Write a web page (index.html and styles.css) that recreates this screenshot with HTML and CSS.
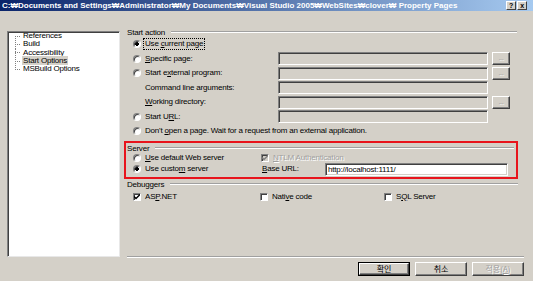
FILE: index.html
```html
<!DOCTYPE html>
<html lang="en">
<head>
    <meta charset="UTF-8">
    <title>Property Pages</title>
    <link rel="stylesheet" href="styles.css">
</head>
<body>
    <div class="window">
        <div class="titlebar">
            <span class="title">C:₩Documents and Settings₩Administrator₩My Documents₩Visual Studio 2005₩WebSites₩clover₩ Property Pages</span>
            <div class="caption-buttons">
                <span class="cap-btn">?</span>
                <span class="cap-btn">x</span>
            </div>
        </div>

        <div class="content">
            <ul class="tree">
                <li><span>References</span></li>
                <li><span>Build</span></li>
                <li><span>Accessibility</span></li>
                <li><span class="selected">Start Options</span></li>
                <li><span>MSBuild Options</span></li>
            </ul>

            <div class="pages">
                <div class="group-label"><span>Start action</span></div>

                <div class="row">
                    <span class="radio checked"></span>
                    <span class="cell"><span class="text focus">Use <u>c</u>urrent page</span></span>
                </div>
                <div class="row">
                    <span class="radio"></span>
                    <span class="cell"><span class="text"><u>S</u>pecific page:</span></span>
                    <span class="textbox"></span>
                    <span class="dots">...</span>
                </div>
                <div class="row">
                    <span class="radio"></span>
                    <span class="cell"><span class="text">Start e<u>x</u>ternal program:</span></span>
                    <span class="textbox"></span>
                    <span class="dots">...</span>
                </div>
                <div class="row">
                    <span class="spacer"></span>
                    <span class="cell"><span class="text">Command line arguments:</span></span>
                    <span class="textbox"></span>
                </div>
                <div class="row">
                    <span class="spacer"></span>
                    <span class="cell"><span class="text"><u>W</u>orking directory:</span></span>
                    <span class="textbox"></span>
                    <span class="dots">...</span>
                </div>
                <div class="row">
                    <span class="radio"></span>
                    <span class="cell"><span class="text">Start U<u>R</u>L:</span></span>
                    <span class="textbox"></span>
                </div>
                <div class="row">
                    <span class="radio"></span>
                    <span class="text">Don't <u>o</u>pen a page. Wait for a request from an external application.</span>
                </div>

                <div class="server-box">
                    <div class="group-label small"><span>Server</span></div>
                    <div class="server-row first">
                        <div class="col-left">
                            <span class="radio"></span>
                            <span class="text"><u>U</u>se default Web server</span>
                        </div>
                        <div class="col-right">
                            <span class="checkbox disabled checked">
                                <svg width="6" height="6" viewBox="0 0 6 6"><path d="M0 2.5 L2 4.5 L6 0.5" fill="none" stroke="#808080" stroke-width="1.4"/></svg>
                            </span>
                            <span class="text disabled-text"><u>N</u>TLM Authentication</span>
                        </div>
                    </div>
                    <div class="server-row">
                        <div class="col-left">
                            <span class="radio checked"></span>
                            <span class="text">Use custo<u>m</u> server</span>
                        </div>
                        <div class="col-right">
                            <span class="text base-label"><u>B</u>ase URL:</span>
                            <span class="textbox url">http://localhost:1111/</span>
                        </div>
                    </div>
                </div>

                <div class="group-label debug"><span>Debuggers</span></div>
                <div class="debug-row">
                    <div class="check-item">
                        <span class="checkbox checked">
                            <svg width="6" height="6" viewBox="0 0 6 6"><path d="M0 2.5 L2 4.5 L6 0.5" fill="none" stroke="#000" stroke-width="1.4"/></svg>
                        </span>
                        <span class="text">AS<u>P</u>.NET</span>
                    </div>
                    <div class="check-item native">
                        <span class="checkbox"></span>
                        <span class="text">Nati<u>v</u>e code</span>
                    </div>
                    <div class="check-item">
                        <span class="checkbox"></span>
                        <span class="text">S<u>Q</u>L Server</span>
                    </div>
                </div>
            </div>
        </div>

        <div class="footer">
            <div class="separator"></div>
            <div class="buttons">
                <span class="button default">확인</span>
                <span class="button">취소</span>
                <span class="button disabled">적용(<u>A</u>)</span>
            </div>
        </div>
    </div>
</body>
</html>
```

FILE: styles.css
```css
* {
    margin: 0;
    padding: 0;
    box-sizing: border-box;
}

body {
    background-color: #d4d0c8;
    font-family: 'Liberation Sans', Arial, sans-serif;
    font-size: 8px;
    letter-spacing: -0.2px;
    color: #000;
}

.window {
    width: 533px;
    height: 281px;
    overflow: hidden;
}

/* Title bar */
.titlebar {
    height: 11px;
    display: flex;
    align-items: center;
    background: linear-gradient(to right, #0a246a, #a6caf0);
    padding: 0 6px 0 2px;
}

.title {
    flex: 1;
    overflow: hidden;
    color: #fff;
    font-weight: bold;
    font-size: 8px;
    letter-spacing: 0;
    white-space: nowrap;
    line-height: 11px;
}

.caption-buttons {
    display: flex;
    gap: 1px;
}

.cap-btn {
    width: 10px;
    height: 9px;
    background: #d4d0c8;
    border: 1px solid;
    border-color: #fff #404040 #404040 #fff;
    font-size: 7px;
    font-weight: bold;
    line-height: 7px;
    text-align: center;
}

/* Main area */
.content {
    display: flex;
    height: 245px;
}

.tree {
    list-style: none;
    width: 113px;
    height: 226px;
    margin: 20px 0 0 7px;
    background: #fff;
    border: 1px solid;
    border-color: #808080 #e8e8e8 #e8e8e8 #808080;
    box-shadow: inset 1px 1px #404040;
}

.tree li {
    height: 8.3px;
    line-height: 8.3px;
    padding-left: 14px;
    background:
        repeating-linear-gradient(to bottom, #808080 0 1px, transparent 1px 2px) 7px 0 / 1px 100% no-repeat,
        repeating-linear-gradient(to right, #808080 0 1px, transparent 1px 2px) 7px 50% / 6px 1px no-repeat;
}

.tree li:first-child {
    background-size: 1px 50%, 6px 1px;
    background-position: 7px 100%, 7px 50%;
}

.tree li:last-child {
    background-size: 1px 50%, 6px 1px;
    background-position: 7px 0, 7px 50%;
}

.tree li span {
    padding: 0 1px;
}

.tree li .selected {
    background: #d4d0c8;
}

.pages {
    flex: 1;
    padding-top: 16px;
}

.group-label {
    display: flex;
    align-items: center;
    height: 10px;
    padding-left: 7px;
    margin-right: 16px;
}

.group-label::after {
    content: "";
    flex: 1;
    margin-left: 6px;
    border-top: 1px solid #a0a0a0;
    border-bottom: 1px solid #fff;
}

.row {
    display: flex;
    align-items: center;
    height: 14.5px;
    padding-left: 13px;
}

.cell {
    width: 133px;
    flex: none;
}

.spacer {
    width: 12px;
    flex: none;
}

.text {
    line-height: 10px;
    white-space: nowrap;
}

.focus {
    display: inline-block;
    outline: 1px dotted #000;
    padding: 0 1px;
    margin-left: -1px;
}

.radio {
    width: 8px;
    height: 8px;
    margin-right: 4px;
    flex: none;
    border-radius: 50%;
    background: #fff;
    border: 1px solid;
    border-color: #808080 #fff #fff #808080;
    box-shadow: inset 1px 1px #404040;
}

.radio.checked {
    background: radial-gradient(circle, #000 0 1.6px, #fff 1.8px);
}

.checkbox {
    display: flex;
    align-items: center;
    justify-content: center;
    width: 8px;
    height: 8px;
    margin-right: 4px;
    flex: none;
    background: #fff;
    border: 1px solid;
    border-color: #808080 #fff #fff #808080;
    box-shadow: inset 1px 1px #404040;
}

.checkbox.disabled {
    background: #d4d0c8;
}

.textbox {
    width: 210px;
    height: 13px;
    flex: none;
    background: #d4d0c8;
    border: 1px solid;
    border-color: #808080 #fff #fff #808080;
    box-shadow: inset 1px 1px #404040;
}

.dots {
    width: 18px;
    height: 13px;
    margin-left: 4px;
    flex: none;
    border: 1px solid;
    border-color: #fff #404040 #404040 #fff;
    box-shadow: inset -1px -1px #808080;
    color: #a0a0a0;
    text-shadow: 1px 1px #fff;
    font-size: 7px;
    line-height: 9px;
    text-align: center;
}

/* Server group, marked with the red box */
.server-box {
    width: 394px;
    height: 38px;
    margin: 2.5px 0 0 4px;
    border: 2px solid #e8141c;
    padding-top: 1px;
}

.server-box .group-label {
    height: 8px;
    padding-left: 1px;
    margin-right: 2px;
}

.server-row {
    display: flex;
    align-items: center;
    height: 12px;
}

.server-row.first {
    height: 11px;
}

.col-left {
    display: flex;
    align-items: center;
    width: 135px;
    padding-left: 7px;
}

.col-right {
    display: flex;
    align-items: center;
}

.disabled-text {
    color: #a0a0a0;
    text-shadow: 1px 1px #fff;
}

.base-label {
    width: 64px;
    padding-left: 1px;
}

.textbox.url {
    width: 183px;
    background: #fff;
    padding-left: 2px;
    line-height: 11px;
    box-shadow: inset 1px 1px #404040, inset -1px -1px #d4d0c8;
}

.group-label.debug {
    margin-right: 15px;
}

.debug-row {
    display: flex;
    align-items: center;
    height: 15px;
    padding-left: 13px;
}

.check-item {
    display: flex;
    align-items: center;
    width: 127px;
}

.check-item.native {
    width: 124px;
}

/* Footer */
.footer {
    padding: 0 9px 0 127px;
}

.separator {
    border-top: 1px solid #a0a0a0;
    border-bottom: 1px solid #fff;
}

.buttons {
    display: flex;
    justify-content: flex-end;
    gap: 5px;
    margin-top: 4px;
}

.button {
    width: 52px;
    height: 14px;
    font-family: 'Noto Sans CJK KR', 'Liberation Sans', sans-serif;
    font-size: 8px;
    letter-spacing: 0;
    line-height: 11px;
    text-align: center;
    border: 1px solid;
    border-color: #fff #404040 #404040 #fff;
    box-shadow: inset -1px -1px #808080;
}

.button.default {
    outline: 1px solid #000;
    outline-offset: -1px;
    border-width: 2px;
    line-height: 9px;
}

.button.disabled {
    color: #a0a0a0;
    text-shadow: 1px 1px #fff;
}
```
